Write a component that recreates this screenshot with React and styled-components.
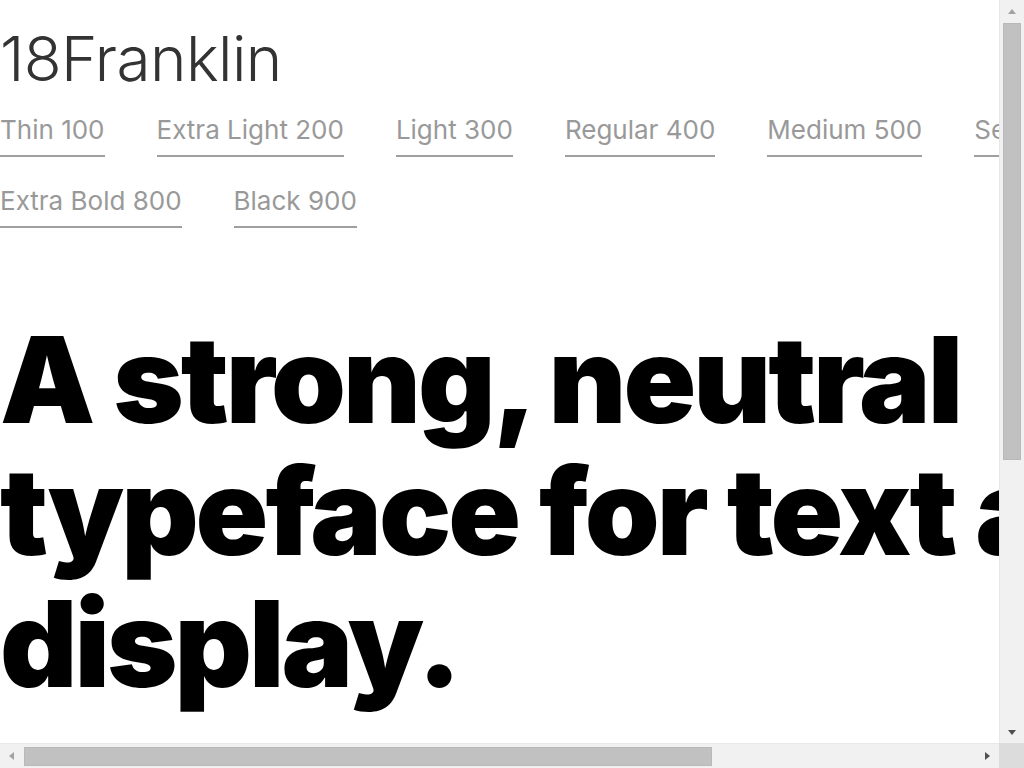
import React from 'react';
import styled, { createGlobalStyle, css } from 'styled-components';

const weights = [
  ['Thin', 100],
  ['Extra Light', 200],
  ['Light', 300],
  ['Regular', 400],
  ['Medium', 500],
  ['Semi Bold', 600],
  ['Bold', 700],
  ['Extra Bold', 800],
  ['Black', 900],
];

const GlobalStyle = createGlobalStyle`
  html, body {
    margin: 0;
    padding: 0;
    height: 100%;
    overflow: hidden;
    background: #fff;
  }
  body {
    font-family: Inter, "Liberation Sans", sans-serif;
  }
`;

// window frame: page area + the browser's scrollbars
const Frame = styled.div`
  display: grid;
  grid-template-columns: 1fr 25px;
  grid-template-rows: 1fr 25px;
  width: 100vw;
  height: 100vh;
`;

const Content = styled.div`
  overflow: hidden;
  background: #fff;
`;

const ScrollBar = styled.div`
  display: flex;
  flex-direction: ${p => (p.vertical ? 'column' : 'row')};
  background: #f1f1f1;
  ${p => p.vertical
    ? css`border-left: 1px solid #e8e8e8;`
    : css`border-top: 1px solid #e8e8e8;`}
`;

const ScrollButton = styled.div`
  flex: 0 0 ${p => (p.vertical ? '22px' : '23px')};
  display: flex;
  align-items: center;
  justify-content: center;
`;

const arrows = {
  up: css`
    border-left: 4px solid transparent;
    border-right: 4px solid transparent;
    border-bottom: 5px solid currentColor;
  `,
  down: css`
    border-left: 4px solid transparent;
    border-right: 4px solid transparent;
    border-top: 5px solid currentColor;
  `,
  left: css`
    border-top: 4px solid transparent;
    border-bottom: 4px solid transparent;
    border-right: 5px solid currentColor;
  `,
  right: css`
    border-top: 4px solid transparent;
    border-bottom: 4px solid transparent;
    border-left: 5px solid currentColor;
  `,
};

const Arrow = styled.span`
  width: 0;
  height: 0;
  color: ${p => (p.disabled ? '#a3a3a3' : '#505050')};
  ${p => arrows[p.dir]}
`;

const Track = styled.div`
  flex: 1;
  display: flex;
  flex-direction: ${p => (p.vertical ? 'column' : 'row')};
  ${p => p.vertical
    ? css`padding: 1px 3px 0 3px;`
    : css`padding: 3px 0 2px 1px;`}
`;

const Thumb = styled.div`
  flex: 0 0 ${p => p.size}px;
  background: #c1c1c1;
  border: 1px solid #b9b9b9;
  box-sizing: border-box;
`;

const Corner = styled.div`
  background: #dcdcdc;
`;

const Page = styled.main`
  width: 1390px;
  padding: 22px 0 500px;
  box-sizing: border-box;
`;

const Title = styled.div`
  font-size: 62px;
  line-height: 1.2;
  font-weight: 300;
  letter-spacing: -0.6px;
  color: #333;
`;

const WeightNav = styled.nav`
  display: flex;
  flex-wrap: wrap;
  column-gap: 52px;
  row-gap: 28px;
  margin-top: 18px;
`;

const WeightLink = styled.a`
  display: block;
  font-size: 26px;
  line-height: 31px;
  font-weight: 400;
  letter-spacing: 0;
  color: #999;
  text-decoration: none;
  padding-bottom: 10px;
  border-bottom: 2px solid #9f9f9f;
  white-space: nowrap;
  cursor: pointer;
`;

const Display = styled.h1`
  margin: 86px 0 0;
  font-size: 120px;
  line-height: 132px;
  font-weight: 900;
  letter-spacing: -3px;
  color: #000;
`;

export default function App() {
  return (
    <>
      <GlobalStyle />
      <Frame>
        <Content>
          <Page>
            <Title>18Franklin</Title>
            <WeightNav>
              {weights.map(([name, value]) => (
                <WeightLink key={value} href={'#' + value}>
                  {name} {value}
                </WeightLink>
              ))}
            </WeightNav>
            <Display>A strong, neutral typeface for text and display.</Display>
          </Page>
        </Content>
        <ScrollBar vertical>
          <ScrollButton vertical><Arrow dir="up" disabled /></ScrollButton>
          <Track vertical><Thumb size={437} /></Track>
          <ScrollButton vertical><Arrow dir="down" /></ScrollButton>
        </ScrollBar>
        <ScrollBar>
          <ScrollButton><Arrow dir="left" disabled /></ScrollButton>
          <Track><Thumb size={688} /></Track>
          <ScrollButton><Arrow dir="right" /></ScrollButton>
        </ScrollBar>
        <Corner />
      </Frame>
    </>
  );
}
